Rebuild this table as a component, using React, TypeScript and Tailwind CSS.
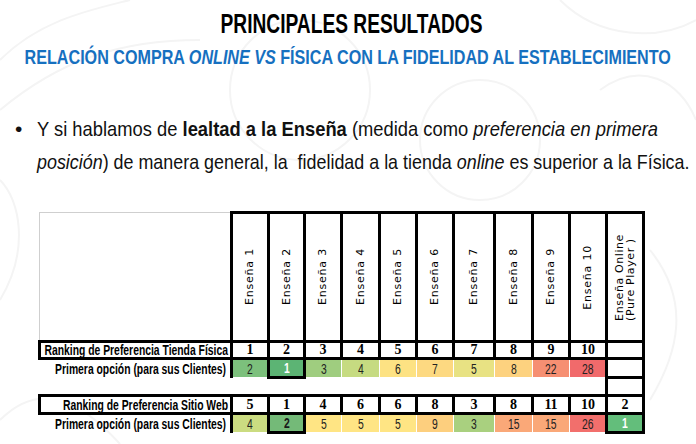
import React from "react";

const SANS = { fontFamily: '"Liberation Sans", Arial, sans-serif' };
const HEAD = { fontFamily: '"DejaVu Sans", Verdana, sans-serif' };
const SERIF = { fontFamily: '"Liberation Serif", "Times New Roman", serif' };

const cols = [37, 36, 37, 38, 37, 37, 41, 38, 37, 37, 37];
const heads = ["Enseña 1", "Enseña 2", "Enseña 3", "Enseña 4", "Enseña 5", "Enseña 6", "Enseña 7", "Enseña 8", "Enseña 9", "Enseña 10"];

type Cell = { v: string; bg: string; hi?: boolean; white?: boolean };

const fisRank = ["1", "2", "3", "4", "5", "6", "7", "8", "9", "10"];
const fisPrim: Cell[] = [
  { v: "2", bg: "#7cc07c" },
  { v: "1", bg: "#5cb474", hi: true, white: true },
  { v: "3", bg: "#9fcd7f" },
  { v: "4", bg: "#c6db81" },
  { v: "6", bg: "#fde283" },
  { v: "7", bg: "#fdd981" },
  { v: "5", bg: "#e8e283" },
  { v: "8", bg: "#fdd27f" },
  { v: "22", bg: "#f68f72" },
  { v: "28", bg: "#f16a6b" },
];
const webRank = ["5", "1", "4", "6", "6", "8", "3", "8", "11", "10", "2"];
const webPrim: Cell[] = [
  { v: "4", bg: "#cbdc81" },
  { v: "2", bg: "#74ba78", hi: true },
  { v: "5", bg: "#ffe584" },
  { v: "5", bg: "#ffe584" },
  { v: "5", bg: "#ffe584" },
  { v: "9", bg: "#fdcf7e" },
  { v: "3", bg: "#a9d07f" },
  { v: "15", bg: "#faa878" },
  { v: "15", bg: "#faa878" },
  { v: "26", bg: "#f26f6c" },
  { v: "1", bg: "#63be7b", hi: true, white: true },
];

function PrimCell({ c, first }: { c: Cell; first: boolean }) {
  const cls = c.hi
    ? "border-[3px] border-black"
    : first
    ? "border border-white border-l-[3px] border-l-black"
    : "border border-white";
  return (
    <td className={`${cls} p-0 text-center align-middle`} style={{ backgroundColor: c.bg }}>
      <span
        className={`inline-block scale-x-[0.74] text-[14px] leading-none ${c.white ? "text-white font-bold" : c.hi ? "text-[#1a1a1a] font-bold" : "text-[#222]"}`}
        style={SANS}
      >
        {c.v}
      </span>
    </td>
  );
}

function Label({ children }: { children: React.ReactNode }) {
  return (
    <div className="flex justify-end">
      <span className="inline-block shrink-0 origin-right scale-x-[0.74] whitespace-nowrap text-[14px] leading-none font-bold text-black" style={SANS}>
        {children}
      </span>
    </div>
  );
}

function RankCell({ v }: { v: string }) {
  return (
    <td className="border-[3px] border-black p-0 text-center bg-white">
      <span className="text-[14px] leading-none font-bold text-black" style={SERIF}>
        {v}
      </span>
    </td>
  );
}

function Watermark() {
  return (
    <svg className="absolute inset-0 pointer-events-none" width="696" height="444" viewBox="0 0 696 444" fill="none">
      <g stroke="#f4f4f4" strokeWidth="2">
        <path d="M0 60 C 40 20, 90 10, 130 0" />
        <path d="M0 110 C 60 60, 120 40, 200 40" />
        <path d="M560 0 C 600 40, 660 40, 696 20" />
        <path d="M600 90 C 640 60, 680 80, 696 120" />
        <path d="M0 300 C 30 250, 20 200, 0 180" />
        <path d="M650 250 C 690 300, 680 350, 650 400" />
        <path d="M0 420 C 40 380, 80 400, 120 444" />
        <circle cx="300" cy="90" r="70" />
        <circle cx="480" cy="140" r="60" />
      </g>
    </svg>
  );
}

export default function App() {
  return (
    <div className="relative w-[696px] h-[444px] overflow-hidden bg-white">
      <Watermark />
      <div className="relative flex flex-col">
        <div className="pt-[9px] pl-[8px] flex justify-center leading-[31px] whitespace-nowrap">
          <span className="inline-block shrink-0 scale-x-[0.71] text-[27px] font-bold text-black" style={SANS}>
            PRINCIPALES RESULTADOS
          </span>
        </div>
        <div className="mt-[6px] flex justify-center leading-[22px] whitespace-nowrap">
          <span className="inline-block shrink-0 scale-x-[0.827] text-[19.5px] font-bold text-[#1670c0]" style={SANS}>
            RELACIÓN COMPRA <i>ONLINE</i> <i>VS</i> FÍSICA CON LA FIDELIDAD AL ESTABLECIMIENTO
          </span>
        </div>
        <div className="mt-[44px] flex pl-[15px] text-[21px] leading-[33px] text-[#111]" style={SANS}>
          <span className="w-[22px] shrink-0">•</span>
          <div className="flex flex-col items-start whitespace-nowrap">
            <span className="inline-block origin-left scale-x-[0.874]">
              Y si hablamos de <b>lealtad a la Enseña</b> (medida como <i>preferencia en primera</i>
            </span>
            <span className="inline-block origin-left scale-x-[0.852]">
              <i>posición</i>) de manera general, la&nbsp; fidelidad a la tienda <i>online</i> es superior a la Física.
            </span>
          </div>
        </div>
        <div className="mt-[33px] pl-[38px]">
          <table className="border-collapse table-fixed text-[12px] leading-none" style={{ width: 604 }}>
            <colgroup>
              <col style={{ width: 192 }} />
              {cols.map((w, i) => (
                <col key={i} style={{ width: w }} />
              ))}
            </colgroup>
            <tbody>
              <tr className="h-[129px]">
                <td className="border border-[#cfcfcf] p-0" />
                {heads.map((h) => (
                  <td key={h} className="border-[3px] border-black p-0 bg-white">
                    <div className="flex h-full items-center justify-center">
                      <span className="[writing-mode:vertical-rl] rotate-180 whitespace-nowrap text-[11px] leading-[12px] tracking-[0.8px] text-black" style={HEAD}>
                        {h}
                      </span>
                    </div>
                  </td>
                ))}
                <td className="border-[3px] border-black p-0 bg-white">
                  <div className="flex h-full items-center justify-center">
                    <span className="[writing-mode:vertical-rl] rotate-180 text-[11px] leading-[11px] tracking-[0.6px] text-black whitespace-nowrap" style={HEAD}>
                      Enseña Online
                      <br />
                      (Pure Player )
                    </span>
                  </div>
                </td>
              </tr>
              <tr className="h-[17px]">
                <td className="border-[3px] border-black p-0 pr-[2px] bg-white">
                  <Label>Ranking de Preferencia Tienda Física</Label>
                </td>
                {fisRank.map((v, i) => (
                  <RankCell key={i} v={v} />
                ))}
                <td className="border-[3px] border-black p-0 bg-white" />
              </tr>
              <tr className="h-[19px]">
                <td className="p-0 pr-[4px]">
                  <Label>Primera opción (para sus Clientes)</Label>
                </td>
                {fisPrim.map((c, i) => (
                  <PrimCell key={i} c={c} first={i === 0} />
                ))}
                <td className="border-[3px] border-black p-0 bg-white" />
              </tr>
              <tr className="h-[18px]">
                <td className="p-0" colSpan={11} />
                <td className="border-x-[3px] border-black p-0 bg-white" />
              </tr>
              <tr className="h-[18px]">
                <td className="border-[3px] border-black p-0 pr-[2px] bg-white">
                  <Label>Ranking de Preferencia Sitio Web</Label>
                </td>
                {webRank.map((v, i) => (
                  <RankCell key={i} v={v} />
                ))}
              </tr>
              <tr className="h-[19px]">
                <td className="p-0 pr-[4px]">
                  <Label>Primera opción (para sus Clientes)</Label>
                </td>
                {webPrim.map((c, i) => (
                  <PrimCell key={i} c={c} first={i === 0} />
                ))}
              </tr>
            </tbody>
          </table>
        </div>
      </div>
    </div>
  );
}
